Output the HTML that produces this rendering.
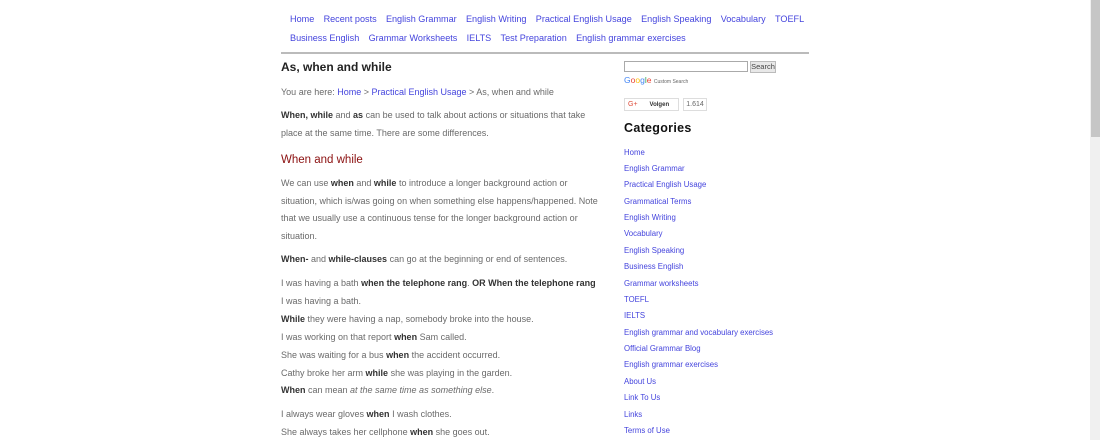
<!DOCTYPE html>
<html><head><meta charset="utf-8"><style>
*{margin:0;padding:0;box-sizing:border-box}
body{width:1100px;height:440px;overflow:hidden;background:#fff;font-family:"Liberation Sans",Arial,sans-serif;position:relative}
.a{position:absolute;white-space:nowrap}
.nav{font-size:9.1px;color:#4444dd}
.nav span{margin-right:9.3px}
.t{font-size:9px;color:#6a6a6a;left:281px}
.t b{color:#333}
.s{font-size:7.8px;color:#4444dd;left:624px}
a{color:#4444dd;text-decoration:none}
</style></head><body>
<div class="a nav" style="left:290px;top:14px"><span>Home</span><span>Recent posts</span><span>English Grammar</span><span>English Writing</span><span>Practical English Usage</span><span>English Speaking</span><span>Vocabulary</span><span>TOEFL</span></div>
<div class="a nav" style="left:290px;top:33px"><span>Business English</span><span>Grammar Worksheets</span><span>IELTS</span><span>Test Preparation</span><span>English grammar exercises</span></div>
<div class="a" style="left:281px;top:52px;width:528px;height:2px;background:#bbb"></div>
<div class="a" style="left:281px;top:60px;font-size:12px;font-weight:bold;color:#222">As, when and while</div>
<div class="a t" style="top:87px">You are here: <a>Home</a> &gt; <a>Practical English Usage</a> &gt; As, when and while</div>
<div class="a t" style="top:110px"><b>When, while</b> and <b>as</b> can be used to talk about actions or situations that take</div>
<div class="a t" style="top:128px">place at the same time. There are some differences.</div>
<div class="a" style="left:281px;top:154px;font-size:11.5px;color:#8b1010">When and while</div>
<div class="a t" style="top:178px">We can use <b>when</b> and <b>while</b> to introduce a longer background action or</div>
<div class="a t" style="top:196px">situation, which is/was going on when something else happens/happened. Note</div>
<div class="a t" style="top:213px">that we usually use a continuous tense for the longer background action or</div>
<div class="a t" style="top:231px">situation.</div>
<div class="a t" style="top:254px"><b>When-</b> and <b>while-clauses</b> can go at the beginning or end of sentences.</div>
<div class="a t" style="top:278px">I was having a bath <b>when the telephone rang</b>. <b>OR When the telephone rang</b></div>
<div class="a t" style="top:296px">I was having a bath.</div>
<div class="a t" style="top:314px"><b>While</b> they were having a nap, somebody broke into the house.</div>
<div class="a t" style="top:332px">I was working on that report <b>when</b> Sam called.</div>
<div class="a t" style="top:350px">She was waiting for a bus <b>when</b> the accident occurred.</div>
<div class="a t" style="top:368px">Cathy broke her arm <b>while</b> she was playing in the garden.</div>
<div class="a t" style="top:385px"><b>When</b> can mean <i>at the same time as something else</i>.</div>
<div class="a t" style="top:409px">I always wear gloves <b>when</b> I wash clothes.</div>
<div class="a t" style="top:427px">She always takes her cellphone <b>when</b> she goes out.</div>

<div class="a" style="left:624px;top:61px;width:124px;height:11px;border:1px solid #aaa"></div>
<div class="a" style="left:750px;top:61px;width:26px;height:12px;border:1px solid #bbb;background:#e8e8e8;font-size:7.5px;color:#444;text-align:center;line-height:10px">Search</div>
<div class="a" style="left:624px;top:75px;font-size:8.5px;color:#4285f4">G<span style="color:#ea4335">o</span><span style="color:#fbbc05">o</span>g<span style="color:#34a853">l</span><span style="color:#ea4335">e</span> <span style="font-size:5px;color:#666">Custom Search</span></div>
<div class="a" style="left:624px;top:98px;width:55px;height:13px;border:1px solid #ddd;font-size:7px;line-height:11px"><span style="color:#dd4b39;margin-left:3px">G+</span><b style="margin-left:12px;color:#333;font-size:6px">Volgen</b></div>
<div class="a" style="left:683px;top:98px;width:24px;height:13px;border:1px solid #ddd;font-size:7px;line-height:11px;color:#666;text-align:center">1.614</div>
<div class="a" style="left:624px;top:121px;font-size:12.5px;font-weight:bold;color:#111;letter-spacing:.3px">Categories</div>
<div class="a s" style="top:148px">Home</div>
<div class="a s" style="top:164px">English Grammar</div>
<div class="a s" style="top:180px">Practical English Usage</div>
<div class="a s" style="top:197px">Grammatical Terms</div>
<div class="a s" style="top:213px">English Writing</div>
<div class="a s" style="top:229px">Vocabulary</div>
<div class="a s" style="top:246px">English Speaking</div>
<div class="a s" style="top:262px">Business English</div>
<div class="a s" style="top:279px">Grammar worksheets</div>
<div class="a s" style="top:295px">TOEFL</div>
<div class="a s" style="top:311px">IELTS</div>
<div class="a s" style="top:328px">English grammar and vocabulary exercises</div>
<div class="a s" style="top:344px">Official Grammar Blog</div>
<div class="a s" style="top:360px">English grammar exercises</div>
<div class="a s" style="top:377px">About Us</div>
<div class="a s" style="top:393px">Link To Us</div>
<div class="a s" style="top:410px">Links</div>
<div class="a s" style="top:426px">Terms of Use</div>

<div class="a" style="left:1090px;top:0;width:10px;height:440px;background:#f0f0f0"></div>
<div class="a" style="left:1091px;top:0;width:9px;height:137px;background:#c6c6c6"></div>
</body></html>
